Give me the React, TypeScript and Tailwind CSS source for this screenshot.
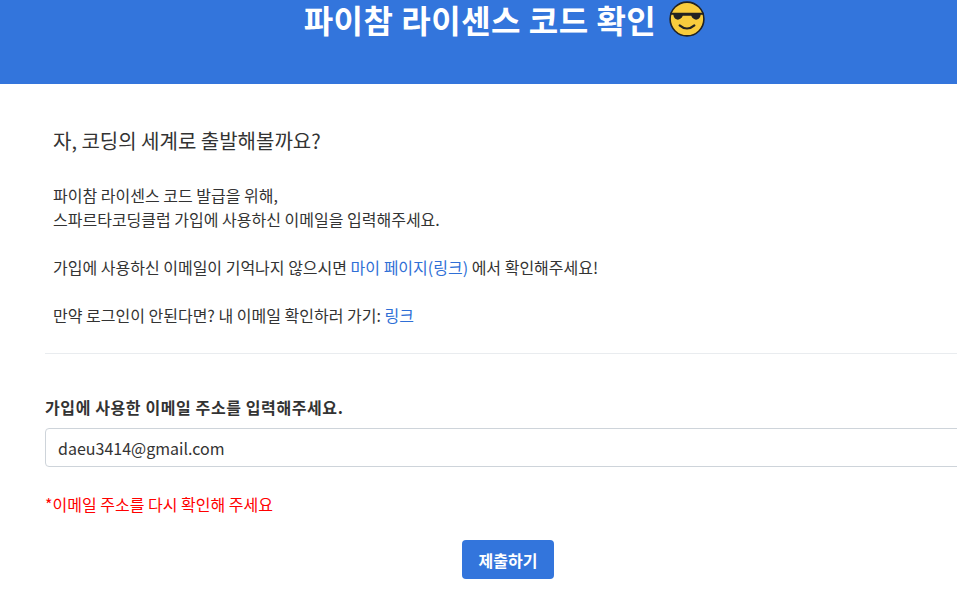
export default function App() {
  const font = { fontFamily: '"Noto Sans CJK KR", "Noto Sans", sans-serif' };
  return (
    <div className="w-[957px] h-[609px] overflow-hidden bg-white text-[#333]" style={font}>
      <div className="w-[1010px]">
        <div className="h-[84px] bg-[#3375dc] flex justify-center items-start">
          <div className="flex items-center gap-3 -mt-[4px]">
            <h1 className="text-[32px] font-bold text-white leading-[46px] tracking-[0.5px]">파이참 라이센스 코드 확인</h1>
            <svg width="38" height="38" viewBox="0 0 36 36">
              <circle cx="18" cy="18" r="16" fill="#f8cc3d" stroke="#222" strokeWidth="1.5" />
              <path d="M2 12 H34 V14 H31 C30 20 24 20 22 15 H14 C12 20 6 20 5 14 H2 Z" fill="#222" />
              <path d="M11 24 Q18 30 25 24" stroke="#222" strokeWidth="2" fill="none" strokeLinecap="round" />
            </svg>
          </div>
        </div>
        <div className="ml-[45px] w-[926px]">
          <div className="px-2 pt-[43px] pb-[26px] border-b border-[#e9ecef]">
            <p className="text-[20px] leading-[28px]">자, 코딩의 세계로 출발해볼까요?</p>
            <div className="mt-[28px] text-[16px] leading-[24px]">
              <p>파이참 라이센스 코드 발급을 위해,</p>
              <p>스파르타코딩클럽 가입에 사용하신 이메일을 입력해주세요.</p>
              <p className="mt-[24px]">가입에 사용하신 이메일이 기억나지 않으시면 <span className="text-[#2f6fd6]">마이 페이지(링크)</span> 에서 확인해주세요!</p>
              <p className="mt-[24px]">만약 로그인이 안된다면? 내 이메일 확인하러 가기: <span className="text-[#2f6fd6]">링크</span></p>
            </div>
          </div>
          <div className="pt-[41px]">
            <p className="text-[16px] font-bold leading-[24px] tracking-[0.6px]">가입에 사용한 이메일 주소를 입력해주세요.</p>
            <div className="mt-[9px] h-[39px] border border-[#ced4da] rounded-[4px] flex items-center px-3 text-[16px] text-[#333]">daeu3414@gmail.com</div>
            <p className="mt-[25px] text-[16px] text-[#ff0000] leading-[24px]">*이메일 주소를 다시 확인해 주세요</p>
            <div className="flex justify-center mt-[24px]">
              <button className="w-[92px] h-[39px] bg-[#3375dc] rounded-[4px] text-white font-bold text-[16px]">제출하기</button>
            </div>
          </div>
        </div>
      </div>
    </div>
  );
}
